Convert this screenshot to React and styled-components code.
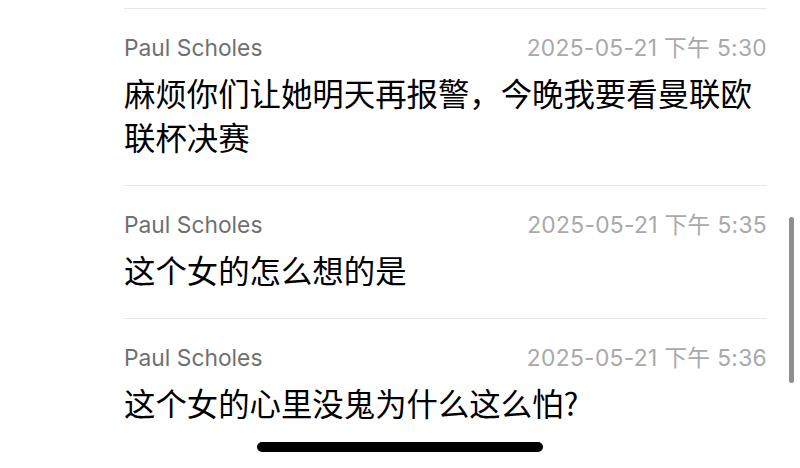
import styled, { createGlobalStyle } from 'styled-components';

const GlobalStyle = createGlobalStyle`
  html, body {
    margin: 0;
    padding: 0;
    background: #ffffff;
  }
  body {
    font-family: Inter, "Noto Sans CJK SC", sans-serif;
  }
`;

const comments = [
  {
    name: 'Paul Scholes',
    time: '2025-05-21 下午 5:30',
    text: '麻烦你们让她明天再报警，今晚我要看曼联欧联杯决赛',
  },
  {
    name: 'Paul Scholes',
    time: '2025-05-21 下午 5:35',
    text: '这个女的怎么想的是',
  },
  {
    name: 'Paul Scholes',
    time: '2025-05-21 下午 5:36',
    text: '这个女的心里没鬼为什么这么怕?',
  },
];

const Screen = styled.div`
  position: relative;
  width: 800px;
  height: 468px;
  overflow: hidden;
  background: #fff;
`;

const List = styled.ul`
  list-style: none;
  margin: 0;
  padding: 8px 33px 0 124px;
`;

const Item = styled.li`
  border-top: 1px solid #e6e6e6;
  padding: 25px 0 26px;
`;

const Meta = styled.div`
  display: flex;
  justify-content: space-between;
  align-items: center;
  height: 28px;
  font-size: 22.8px;
  line-height: 28px;
  margin-bottom: 9px;
`;

const Name = styled.span`
  color: #707070;
`;

const Time = styled.span`
  color: #a9a9a9;
  letter-spacing: 0.3px;
`;

const Message = styled.p`
  margin: 0;
  font-family: "Noto Sans CJK SC", sans-serif;
  font-size: 31.4px;
  line-height: 44px;
  color: #000;
`;

const ScrollBar = styled.div`
  position: absolute;
  right: 6px;
  top: 217px;
  width: 5px;
  height: 166px;
  border-radius: 3px;
  background: #8e8e8e;
`;

const HomeIndicator = styled.div`
  position: absolute;
  left: 257px;
  top: 442px;
  width: 286px;
  height: 10px;
  border-radius: 5px;
  background: #000;
`;

export default function App() {
  return (
    <Screen>
      <GlobalStyle />
      <List>
        {comments.map((c, idx) => (
          <Item key={idx}>
            <Meta>
              <Name>{c.name}</Name>
              <Time>{c.time}</Time>
            </Meta>
            <Message>{c.text}</Message>
          </Item>
        ))}
      </List>
      <ScrollBar />
      <HomeIndicator />
    </Screen>
  );
}
